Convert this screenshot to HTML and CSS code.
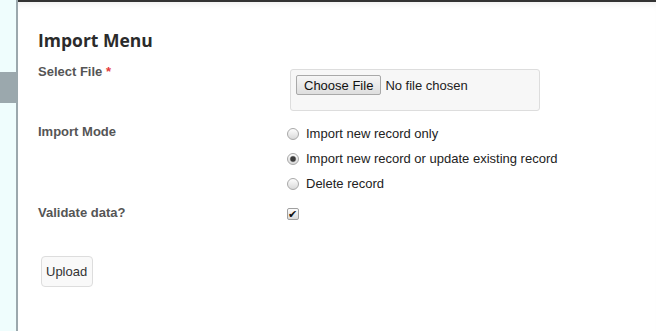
FILE: index.html
```html
<!DOCTYPE html>
<html lang="en">
<head>
  <meta charset="UTF-8" />
  <meta name="viewport" content="width=device-width, initial-scale=1.0"/>
  <title>Import Menu</title>
  <link rel="stylesheet" href="styles.css">
</head>
<body>

<div class="layout">
  <div class="sidebar">
    <div class="sidebar-tab"></div>
  </div>

  <div class="main">
    <h1>Import Menu</h1>

    <form class="import-form" onsubmit="return false;">
      <div class="form-row file-row">
        <label class="field-label">Select File <span class="required">*</span></label>
        <div class="field-value">
          <input type="file" name="import_file" class="file-input"/>
        </div>
      </div>

      <div class="form-row mode-row">
        <label class="field-label">Import Mode</label>
        <div class="field-value">
          <label class="option"><input type="radio" name="mode" value="new"/> Import new record only</label>
          <label class="option"><input type="radio" name="mode" value="update" checked/> Import new record or update existing record</label>
          <label class="option"><input type="radio" name="mode" value="delete"/> Delete record</label>
        </div>
      </div>

      <div class="form-row validate-row">
        <label class="field-label">Validate data?</label>
        <div class="field-value">
          <input type="checkbox" name="validate" class="check" checked/>
        </div>
      </div>

      <button type="submit" class="upload-button">Upload</button>
    </form>
  </div>
</div>

</body>
</html>
```

FILE: styles.css
```css
body {
  margin: 0;
  font-family: 'Liberation Sans', Arial, sans-serif;
  font-size: 13px;
  background-color: white;
  color: #333;
}
.layout {
  display: flex;
  min-height: 100vh;
}
.sidebar {
  width: 16px;
  background-color: #effdfd;
  border-right: 2px solid #9ba8ad;
}
.sidebar-tab {
  margin-top: 72px;
  height: 31px;
  background-color: #9ba8ad;
}
.main {
  flex: 1;
  border-top: 2px solid #333;
  box-shadow: inset 0 6px 6px -4px rgba(0, 0, 0, 0.07);
  padding: 27px 20px 0 20px;
}
h1 {
  margin: 0 0 13px 0;
  font-family: 'Open Sans', 'Liberation Sans', sans-serif;
  font-size: 17.5px;
  line-height: 22px;
  font-weight: bold;
  color: #2b2b2b;
}
.form-row {
  display: grid;
  grid-template-columns: 248px 1fr;
  align-items: start;
}
.field-label {
  font-weight: bold;
  color: #555;
  line-height: 16px;
}
.required {
  color: #e43b3b;
}
.file-input {
  display: block;
  box-sizing: border-box;
  width: 250px;
  height: 42px;
  margin: 5px 0 0 4px;
  padding: 5px 5px 0 5px;
  border: 1px solid #ddd;
  border-radius: 3px;
  background-color: #f7f7f7;
  font-family: 'Liberation Sans', Arial, sans-serif;
  font-size: 13px;
  line-height: 15px;
  color: #222;
}
.file-input::file-selector-button {
  margin: 0 4px 0 0;
  padding: 2px 7px 1px 7px;
  border: 1px solid #a9a9a9;
  border-radius: 2px;
  background: linear-gradient(#f6f6f6, #dedede);
  font-family: 'Liberation Sans', Arial, sans-serif;
  font-size: 13px;
  line-height: 15px;
  color: #111;
}
.mode-row {
  margin-top: 10px;
}
.mode-row .field-label {
  padding-top: 3px;
}
.option {
  display: flex;
  align-items: center;
  height: 25px;
  color: #222;
}
input[type="radio"] {
  appearance: none;
  width: 12px;
  height: 12px;
  margin: 0 7px 0 1px;
  border: 1px solid #a8a8a8;
  border-radius: 50%;
  background: linear-gradient(#fdfdfd, #d9d9d9);
}
input[type="radio"]:checked {
  background:
    radial-gradient(circle, #3c3c3c 0 2.2px, #8a8a8a 2.8px, transparent 3.6px),
    linear-gradient(#fdfdfd, #d9d9d9);
}
.validate-row {
  margin-top: 9px;
}
.check {
  appearance: none;
  position: relative;
  width: 12px;
  height: 12px;
  margin: 3px 0 0 1px;
  border: 1px solid #a0a0a0;
  border-radius: 2px;
  background: linear-gradient(#fdfdfd, #dadada);
}
.check:checked::after {
  content: "\2714";
  position: absolute;
  left: 0;
  top: -1px;
  font-size: 11px;
  line-height: 12px;
  color: #111;
}
.upload-button {
  margin: 33px 0 0 3px;
  padding: 7px 5px 7px 4px;
  border: 1px solid #ddd;
  border-radius: 4px;
  background-color: #f9f9f9;
  font-family: 'Liberation Sans', Arial, sans-serif;
  font-size: 13px;
  line-height: 15px;
  color: #333;
  cursor: pointer;
}
```
